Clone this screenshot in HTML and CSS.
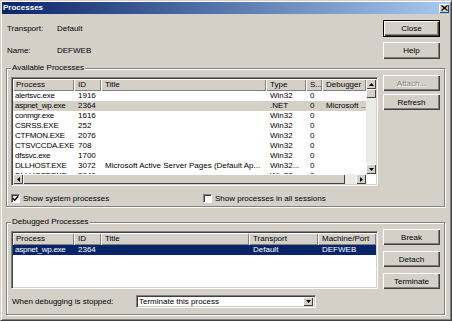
FILE: index.html
```html
<!DOCTYPE html>
<html lang="en">
<head>
  <meta charset="UTF-8" />
  <title>Processes</title>
  <link rel="stylesheet" href="styles.css">
</head>
<body>

<div class="window">
  <div class="titlebar">
    <span class="title">Processes</span>
    <span class="title-close">
      <svg width="7" height="6" viewBox="0 0 7 6"><path d="M0.5 0.5 L6.5 5.5 M6.5 0.5 L0.5 5.5" stroke="#000" stroke-width="1.4"/></svg>
    </span>
  </div>

  <div class="content">
    <!-- transport info + main buttons -->
    <div class="top">
      <div class="info">
        <span>Transport:</span><span>Default</span>
        <span>Name:</span><span>DEFWEB</span>
      </div>
      <div class="btn-col">
        <button class="btn default">Close</button>
        <button class="btn">Help</button>
      </div>
    </div>

    <!-- Available -->
    <fieldset class="group avail">
      <legend>Available Processes</legend>
      <div class="grp-row">
        <div class="listview lv-scroll">
          <div class="lv-view">
            <div class="lv-head cols-a">
              <span>Process</span><span>ID</span><span>Title</span><span>Type</span><span>S...</span><span>Debugger</span>
            </div>
            <div class="lv-row cols-a"><span>alertsvc.exe</span><span>1916</span><span></span><span>Win32</span><span>0</span><span></span></div>
            <div class="lv-row cols-a dim"><span>aspnet_wp.exe</span><span>2364</span><span></span><span>.NET</span><span>0</span><span>Microsoft ..</span></div>
            <div class="lv-row cols-a"><span>conmgr.exe</span><span>1616</span><span></span><span>Win32</span><span>0</span><span></span></div>
            <div class="lv-row cols-a"><span>CSRSS.EXE</span><span>252</span><span></span><span>Win32</span><span>0</span><span></span></div>
            <div class="lv-row cols-a"><span>CTFMON.EXE</span><span>2076</span><span></span><span>Win32</span><span>0</span><span></span></div>
            <div class="lv-row cols-a"><span>CTSVCCDA.EXE</span><span>708</span><span></span><span>Win32</span><span>0</span><span></span></div>
            <div class="lv-row cols-a"><span>dfssvc.exe</span><span>1700</span><span></span><span>Win32</span><span>0</span><span></span></div>
            <div class="lv-row cols-a"><span>DLLHOST.EXE</span><span>3072</span><span>Microsoft Active Server Pages (Default Ap...</span><span>Win32...</span><span>0</span><span></span></div>
            <div class="lv-row cols-a"><span>DLLHOST.EXE</span><span>3840</span><span></span><span>Win32</span><span>0</span><span></span></div>
          </div>
          <div class="vscroll">
            <span class="sb-btn"><svg width="5" height="3" viewBox="0 0 5 3"><polygon points="0,3 2.5,0 5,3" fill="#000"/></svg></span>
            <span class="sb-thumb v"></span>
            <span class="sb-track"></span>
            <span class="sb-btn"><svg width="5" height="3" viewBox="0 0 5 3"><polygon points="0,0 5,0 2.5,3" fill="#000"/></svg></span>
          </div>
          <div class="hscroll">
            <span class="sb-btn"><svg width="3" height="5" viewBox="0 0 3 5"><polygon points="3,0 3,5 0,2.5" fill="#000"/></svg></span>
            <span class="sb-thumb h"></span>
            <span class="sb-track gap"></span>
            <span class="sb-btn"><svg width="3" height="5" viewBox="0 0 3 5"><polygon points="0,0 3,2.5 0,5" fill="#000"/></svg></span>
          </div>
          <div class="corner"></div>
        </div>
        <div class="btn-col side">
          <button class="btn" disabled>Attach...</button>
          <button class="btn">Refresh</button>
        </div>
      </div>
      <div class="checks">
        <label class="check"><span class="box"><svg width="7" height="7" viewBox="0 0 7 7"><polyline points="0.8,3.2 2.7,5.2 6.2,1.2" fill="none" stroke="#000" stroke-width="1.5"/></svg></span>Show system processes</label>
        <label class="check"><span class="box"></span>Show processes in all sessions</label>
      </div>
    </fieldset>

    <!-- Debugged -->
    <fieldset class="group debugged">
      <legend>Debugged Processes</legend>
      <div class="grp-row">
        <div class="listview lv-plain">
          <div class="lv-head cols-d">
            <span>Process</span><span>ID</span><span>Title</span><span>Transport</span><span>Machine/Port</span>
          </div>
          <div class="lv-row cols-d sel"><span>aspnet_wp.exe</span><span>2364</span><span></span><span>Default</span><span>DEFWEB</span></div>
        </div>
        <div class="btn-col side debug-btns">
          <button class="btn">Break</button>
          <button class="btn">Detach</button>
          <button class="btn">Terminate</button>
        </div>
      </div>
      <div class="stop-row">
        <span class="stop-label">When debugging is stopped:</span>
        <div class="combo">
          <span>Terminate this process</span>
          <span class="sb-btn combo-btn"><svg width="5" height="3" viewBox="0 0 5 3"><polygon points="0,0 5,0 2.5,3" fill="#000"/></svg></span>
        </div>
      </div>
    </fieldset>
  </div>
</div>

</body>
</html>
```

FILE: styles.css
```css
* {
  box-sizing: border-box;
}
body {
  margin: 0;
  background: #d4d0c8;
  font-family: "Liberation Sans", Arial, sans-serif;
  font-size: 8px;
  color: #000;
}
.window {
  width: 452px;
  height: 321px;
  overflow: hidden;
  background: #d4d0c8;
  border: 1px solid;
  border-color: #d4d0c8 #404040 #404040 #d4d0c8;
  box-shadow: inset 1px 1px #fff, inset -1px -1px #808080;
  padding: 1px;
  display: flex;
  flex-direction: column;
}
.titlebar {
  height: 12px;
  flex: none;
  background: linear-gradient(to right, #0a246a, #a6caf0);
  display: flex;
  align-items: center;
  justify-content: space-between;
  padding: 0 1px;
}
.title {
  color: #fff;
  font-weight: bold;
  line-height: 12px;
}
.title-close {
  width: 10px;
  height: 9px;
  background: #d4d0c8;
  box-shadow: inset 1px 1px #fff, inset -1px -1px #404040;
  display: flex;
  align-items: center;
  justify-content: center;
}
.content {
  padding: 6px 5px 0 4px;
}
.top {
  display: flex;
  justify-content: space-between;
  padding: 0 5px 0 1px;
}
.info {
  display: grid;
  grid-template-columns: 50px auto;
  grid-auto-rows: 17px;
  row-gap: 5px;
  align-items: center;
}
.btn-col {
  display: flex;
  flex-direction: column;
  gap: 5px;
}
.btn {
  width: 57px;
  height: 17px;
  padding: 0;
  font: inherit;
  color: #000;
  background: #d4d0c8;
  border: none;
  box-shadow: inset 1px 1px #fff, inset -1px -1px #404040, inset -2px -2px #808080;
}
.btn.default {
  border: 1px solid #000;
}
.btn:disabled {
  color: #808080;
  text-shadow: 1px 1px #fff;
}
.group {
  margin: 4px 0 0;
  padding: 4px 4px 3px 4px;
  border: 1px solid #808080;
  box-shadow: inset 1px 1px #fff, 1px 1px #fff;
  min-width: 0;
}
.group legend {
  padding: 0 1px;
  line-height: 10px;
  background: #d4d0c8;
}
.group.debugged {
  margin-top: 10px;
  padding: 4px 4px 6px 4px;
}
.grp-row {
  display: flex;
  align-items: flex-start;
  gap: 5px;
}
.side {
  margin-top: -2px;
  gap: 3px;
}
.side .btn {
  height: 16px;
}
.debug-btns {
  gap: 6px;
}
.listview {
  width: 367px;
  background: #fff;
  border: 1px solid;
  border-color: #808080 #fff #fff #808080;
  box-shadow: inset 1px 1px #404040, inset -1px -1px #d4d0c8;
  padding: 1px;
}
.lv-scroll {
  height: 109px;
  display: grid;
  grid-template-columns: 1fr 10px;
  grid-template-rows: 1fr 10px;
}
.lv-plain {
  height: 58px;
}
.lv-view {
  overflow: hidden;
}
.lv-head {
  display: grid;
  height: 12px;
  background: #d4d0c8;
}
.lv-head span {
  box-shadow: inset 1px 1px #fff, inset -1px -1px #808080;
  padding-left: 4px;
  line-height: 12px;
  white-space: nowrap;
  overflow: hidden;
}
.lv-row {
  display: grid;
  height: 10px;
  line-height: 10px;
}
.lv-row span {
  padding-left: 4px;
  white-space: nowrap;
  overflow: hidden;
}
.lv-head span:first-child {
  padding-left: 3px;
}
.lv-row span:first-child {
  padding-left: 2px;
  letter-spacing: -0.25px;
}
.lv-row.dim {
  background: #d4d0c8;
}
.lv-row.sel {
  background: #0a246a;
  color: #fff;
}
.cols-a {
  grid-template-columns: 61px 27px 165px 40px 16px 44px;
}
.cols-d {
  grid-template-columns: 61px 27px 148px 69px 58px;
}
.vscroll {
  display: flex;
  flex-direction: column;
  background: #eceae5;
}
.hscroll {
  display: flex;
  background: #eceae5;
}
.corner {
  background: #fff;
}
.sb-btn {
  flex: none;
  width: 10px;
  height: 10px;
  background: #d4d0c8;
  box-shadow: inset 1px 1px #fff, inset -1px -1px #404040;
  display: flex;
  align-items: center;
  justify-content: center;
}
.sb-thumb {
  flex: none;
  background: #d4d0c8;
  box-shadow: inset 1px 1px #fff, inset -1px -1px #404040;
}
.sb-thumb.v {
  height: 9px;
}
.sb-thumb.h {
  flex: 1;
}
.sb-track {
  flex: 1;
}
.sb-track.gap {
  flex: 0 0 11px;
}
.checks {
  display: grid;
  grid-template-columns: 192px auto;
  align-items: center;
  height: 10px;
  margin-top: 7px;
}
.check {
  display: flex;
  align-items: center;
  gap: 3px;
}
.box {
  width: 9px;
  height: 9px;
  background: #fff;
  border: 1px solid;
  border-color: #808080 #fff #fff #808080;
  box-shadow: inset 1px 1px #404040;
  display: flex;
  align-items: center;
  justify-content: center;
}
.stop-row {
  display: grid;
  grid-template-columns: 125px 180px;
  align-items: center;
  margin-top: 6px;
}
.stop-label {
  padding-left: 1px;
}
.combo {
  height: 13px;
  background: #fff;
  border: 1px solid;
  border-color: #808080 #fff #fff #808080;
  box-shadow: inset 1px 1px #404040, inset -1px -1px #d4d0c8;
  display: flex;
  align-items: center;
  justify-content: space-between;
  padding: 0 2px 0 2px;
}
.combo-btn {
  height: 9px;
}
```
